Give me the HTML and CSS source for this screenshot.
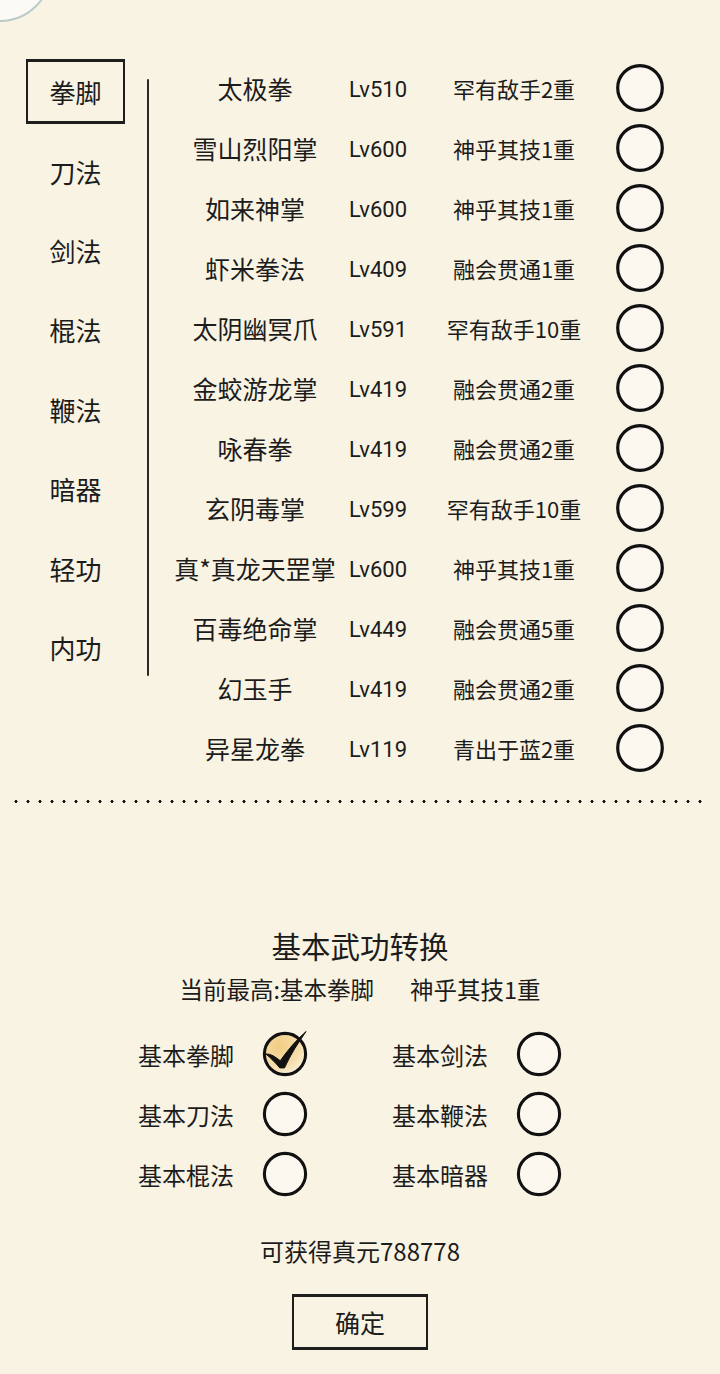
FILE: index.html
```html
<!DOCTYPE html>
<html lang="zh-CN">
<head>
<meta charset="utf-8">
<title>基本武功转换</title>
<link rel="stylesheet" href="styles.css">
</head>
<body>
<div class="corner-bubble"></div>

<section class="skills">
  <nav class="tabs">
    <div class="tab tab-active"><span class="tab-box">拳脚</span></div>
    <div class="tab">刀法</div>
    <div class="tab">剑法</div>
    <div class="tab">棍法</div>
    <div class="tab">鞭法</div>
    <div class="tab">暗器</div>
    <div class="tab">轻功</div>
    <div class="tab">内功</div>
  </nav>
  <div class="divider"></div>
  <div class="list">
    <div class="row"><span class="name">太极拳</span><span class="lv">Lv510</span><span class="tier">罕有敌手2重</span><svg class="ring" viewBox="0 0 48 48"><circle cx="24" cy="24" r="22.3"/></svg></div>
    <div class="row"><span class="name">雪山烈阳掌</span><span class="lv">Lv600</span><span class="tier">神乎其技1重</span><svg class="ring" viewBox="0 0 48 48"><circle cx="24" cy="24" r="22.3"/></svg></div>
    <div class="row"><span class="name">如来神掌</span><span class="lv">Lv600</span><span class="tier">神乎其技1重</span><svg class="ring" viewBox="0 0 48 48"><circle cx="24" cy="24" r="22.3"/></svg></div>
    <div class="row"><span class="name">虾米拳法</span><span class="lv">Lv409</span><span class="tier">融会贯通1重</span><svg class="ring" viewBox="0 0 48 48"><circle cx="24" cy="24" r="22.3"/></svg></div>
    <div class="row"><span class="name">太阴幽冥爪</span><span class="lv">Lv591</span><span class="tier">罕有敌手10重</span><svg class="ring" viewBox="0 0 48 48"><circle cx="24" cy="24" r="22.3"/></svg></div>
    <div class="row"><span class="name">金蛟游龙掌</span><span class="lv">Lv419</span><span class="tier">融会贯通2重</span><svg class="ring" viewBox="0 0 48 48"><circle cx="24" cy="24" r="22.3"/></svg></div>
    <div class="row"><span class="name">咏春拳</span><span class="lv">Lv419</span><span class="tier">融会贯通2重</span><svg class="ring" viewBox="0 0 48 48"><circle cx="24" cy="24" r="22.3"/></svg></div>
    <div class="row"><span class="name">玄阴毒掌</span><span class="lv">Lv599</span><span class="tier">罕有敌手10重</span><svg class="ring" viewBox="0 0 48 48"><circle cx="24" cy="24" r="22.3"/></svg></div>
    <div class="row"><span class="name">真*真龙天罡掌</span><span class="lv">Lv600</span><span class="tier">神乎其技1重</span><svg class="ring" viewBox="0 0 48 48"><circle cx="24" cy="24" r="22.3"/></svg></div>
    <div class="row"><span class="name">百毒绝命掌</span><span class="lv">Lv449</span><span class="tier">融会贯通5重</span><svg class="ring" viewBox="0 0 48 48"><circle cx="24" cy="24" r="22.3"/></svg></div>
    <div class="row"><span class="name">幻玉手</span><span class="lv">Lv419</span><span class="tier">融会贯通2重</span><svg class="ring" viewBox="0 0 48 48"><circle cx="24" cy="24" r="22.3"/></svg></div>
    <div class="row"><span class="name">异星龙拳</span><span class="lv">Lv119</span><span class="tier">青出于蓝2重</span><svg class="ring" viewBox="0 0 48 48"><circle cx="24" cy="24" r="22.3"/></svg></div>
  </div>
</section>

<div class="dots"></div>

<section class="convert">
  <h1 class="title">基本武功转换</h1>
  <p class="current"><span>当前最高:基本拳脚</span><span class="current-tier">神乎其技1重</span></p>
  <div class="choices">
    <div class="choice"><span class="label">基本拳脚</span>
      <svg class="ring ring-sm" viewBox="0 0 48 48">
        <defs><radialGradient id="gold" cx="0.35" cy="0.3" r="0.8"><stop offset="0" stop-color="#f1cd82"/><stop offset="0.65" stop-color="#f5dfae"/><stop offset="1" stop-color="#fbf3e2"/></radialGradient></defs>
        <circle cx="24" cy="24" r="21.5" class="checked"/>
        <path class="tick" d="M4 24 C 9 23.5, 14 27, 19 31 C 27 20, 35 10, 46 0.5 C 38 12, 30 24, 23.5 38.5 L 18.5 38.5 C 14 33, 9 28, 4 24 Z"/>
      </svg>
    </div>
    <div class="choice"><span class="label">基本剑法</span><svg class="ring ring-sm" viewBox="0 0 48 48"><circle cx="24" cy="24" r="21.5"/></svg></div>
    <div class="choice"><span class="label">基本刀法</span><svg class="ring ring-sm" viewBox="0 0 48 48"><circle cx="24" cy="24" r="21.5"/></svg></div>
    <div class="choice"><span class="label">基本鞭法</span><svg class="ring ring-sm" viewBox="0 0 48 48"><circle cx="24" cy="24" r="21.5"/></svg></div>
    <div class="choice"><span class="label">基本棍法</span><svg class="ring ring-sm" viewBox="0 0 48 48"><circle cx="24" cy="24" r="21.5"/></svg></div>
    <div class="choice"><span class="label">基本暗器</span><svg class="ring ring-sm" viewBox="0 0 48 48"><circle cx="24" cy="24" r="21.5"/></svg></div>
  </div>
  <p class="gain">可获得真元788778</p>
  <button class="confirm">确定</button>
</section>
</body>
</html>
```

FILE: styles.css
```css
html, body {
  margin: 0;
  padding: 0;
}
body {
  width: 720px;
  min-height: 1374px;
  background: #f9f3e3;
  color: #1c1c1c;
  font-family: "Noto Sans CJK SC", "Noto Sans", sans-serif;
  position: relative;
  overflow: hidden;
}

.corner-bubble {
  position: absolute;
  left: -52px;
  top: -82px;
  width: 104px;
  height: 104px;
  border-radius: 50%;
  background: #fcfaf4;
  border: 2px solid #b9cac9;
  box-sizing: border-box;
}

/* ---------- skill list ---------- */
.skills {
  display: flex;
  align-items: flex-start;
  padding: 52px 0 0 26px;
}
.tabs {
  width: 99px;
  display: flex;
  flex-direction: column;
}
.tab {
  height: 79.4px;
  display: flex;
  align-items: center;
  justify-content: center;
  font-size: 26px;
}
.tab-box {
  width: 99px;
  height: 65px;
  box-sizing: border-box;
  border: 2px solid #1e1e1e;
  border-top-width: 3px;
  border-bottom-width: 3px;
  display: flex;
  align-items: center;
  justify-content: center;
}
.divider {
  width: 2px;
  height: 597px;
  margin: 27px 0 0 22px;
  background: #2a2a2a;
  border-radius: 1px;
}
.list {
  margin: 6px 0 0 17px;
}
.row {
  height: 60px;
  display: grid;
  grid-template-columns: 178px 68px 204px 48px;
  align-items: center;
}
.name {
  text-align: center;
  font-size: 25px;
  white-space: nowrap;
}
.lv {
  text-align: center;
  font-family: Roboto, "Noto Sans", sans-serif;
  font-size: 22px;
  padding-top: 2px;
}
.tier {
  text-align: center;
  font-size: 22px;
  white-space: nowrap;
}
.ring {
  width: 48px;
  height: 48px;
  display: block;
  overflow: visible;
}
.ring circle {
  fill: #fcf8ef;
  stroke: #111;
  stroke-width: 3.2;
}
.ring-sm {
  width: 46px;
  height: 46px;
}
.ring circle.checked {
  fill: url(#gold);
}
.tick {
  fill: #111;
  stroke: #111;
  stroke-width: 1;
  stroke-linejoin: round;
}

.dots {
  margin: 22px 10px 0 10px;
  height: 3px;
  background-image: radial-gradient(circle, #1a1a1a 1.4px, transparent 1.7px);
  background-size: 12px 3px;
  background-repeat: repeat-x;
}

/* ---------- conversion ---------- */
.convert {
  display: flex;
  flex-direction: column;
  align-items: center;
  padding-top: 122px;
}
.title {
  margin: 0;
  font-size: 29.5px;
  font-weight: 400;
  line-height: 40px;
}
.current {
  margin: 9px 0 0 0;
  font-size: 23.5px;
  line-height: 30px;
}
.current-tier {
  margin-left: 36px;
}
.choices {
  align-self: flex-start;
  margin: 20px 0 0 138px;
  display: grid;
  grid-template-columns: 254px 180px;
  grid-auto-rows: 60px;
}
.choice {
  display: flex;
  align-items: center;
  gap: 28px;
}
.label {
  font-size: 24px;
  width: 96px;
  white-space: nowrap;
}
.gain {
  margin: 32px 0 0 0;
  font-size: 24px;
  line-height: 30px;
}
.confirm {
  margin-top: 28px;
  width: 136px;
  height: 56px;
  background: transparent;
  border: 2px solid #1e1e1e;
  border-top-width: 3px;
  border-bottom-width: 3px;
  font-family: inherit;
  font-size: 25px;
  color: #1c1c1c;
  padding: 0;
}
```
